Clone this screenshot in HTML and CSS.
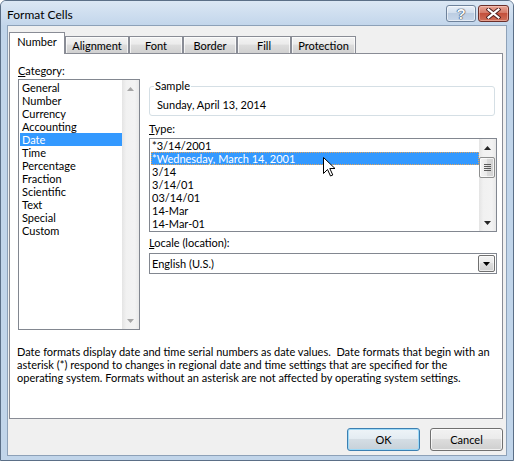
FILE: index.html
```html
<!DOCTYPE html>
<html lang="en">
<head>
<meta charset="utf-8">
<title>Format Cells</title>
<link rel="stylesheet" href="styles.css">
</head>
<body>
<div class="window">
  <div class="titlebar">
    <span class="title">Format Cells</span>
    <div class="caption-btns">
      <span class="cap-btn help"><span class="q">?</span></span>
      <span class="cap-btn close">
        <svg width="15" height="11" viewBox="0 0 15 11">
          <path d="M2.5 1.5 L12.5 9.5 M12.5 1.5 L2.5 9.5" stroke="#4a1c1c" stroke-width="4" stroke-linecap="square" fill="none"/>
          <path d="M2.5 1.5 L12.5 9.5 M12.5 1.5 L2.5 9.5" stroke="#ffffff" stroke-width="2.2" stroke-linecap="square" fill="none"/>
        </svg>
      </span>
    </div>
  </div>
  <div class="client">
    <div class="tabs">
      <div class="tab active w-number">Number</div>
      <div class="tab w-alignment">Alignment</div>
      <div class="tab w-std">Font</div>
      <div class="tab w-std">Border</div>
      <div class="tab w-std">Fill</div>
      <div class="tab w-protection">Protection</div>
    </div>
    <div class="panel">
      <div class="cols">
        <div class="col-left">
          <div class="label"><u>C</u>ategory:</div>
          <div class="listbox cat">
            <ul class="items">
              <li>General</li>
              <li>Number</li>
              <li>Currency</li>
              <li>Accounting</li>
              <li class="sel">Date</li>
              <li>Time</li>
              <li>Percentage</li>
              <li>Fraction</li>
              <li>Scientific</li>
              <li>Text</li>
              <li>Special</li>
              <li>Custom</li>
            </ul>
            <div class="vscroll disabled">
              <div class="sb-btn"><svg width="7" height="4" viewBox="0 0 7 4"><path d="M0 4 L3.5 0 L7 4 Z"/></svg></div>
              <div class="sb-track"></div>
              <div class="sb-btn"><svg width="7" height="4" viewBox="0 0 7 4"><path d="M0 0 L7 0 L3.5 4 Z"/></svg></div>
            </div>
          </div>
        </div>
        <div class="col-right">
          <fieldset class="sample">
            <legend>Sample</legend>
            <div class="sample-text">Sunday, April 13, 2014</div>
          </fieldset>
          <div class="label type-label"><u>T</u>ype:</div>
          <div class="listbox type">
            <ul class="items">
              <li>*3/14/2001</li>
              <li class="sel focus">*Wednesday, March 14, 2001</li>
              <li>3/14</li>
              <li>3/14/01</li>
              <li>03/14/01</li>
              <li>14-Mar</li>
              <li>14-Mar-01</li>
            </ul>
            <div class="vscroll">
              <div class="sb-btn"><svg width="7" height="4" viewBox="0 0 7 4"><path d="M0 4 L3.5 0 L7 4 Z"/></svg></div>
              <div class="sb-track">
                <div class="thumb">
                  <svg width="7" height="7" viewBox="0 0 7 7">
                    <path d="M0 0.5 H7 M0 2.5 H7 M0 4.5 H7 M0 6.5 H7" stroke="#5a5a5a" stroke-width="1"/>
                  </svg>
                </div>
              </div>
              <div class="sb-btn"><svg width="7" height="4" viewBox="0 0 7 4"><path d="M0 0 L7 0 L3.5 4 Z"/></svg></div>
            </div>
            <svg class="cursor" width="13" height="20" viewBox="0 0 13 20">
              <path d="M0.5 0.5 L0.5 16.5 L4.5 12.5 L7.5 19 L9.8 18 L6.8 11.5 L12 11.5 Z" fill="#ffffff" stroke="#000000" stroke-width="1" stroke-linejoin="miter"/>
            </svg>
          </div>
          <div class="label locale-label"><u>L</u>ocale (location):</div>
          <div class="combo">
            <span class="combo-text">English (U.S.)</span>
            <span class="combo-btn"><svg width="7" height="4" viewBox="0 0 7 4"><path d="M0 0 L7 0 L3.5 4 Z" fill="#000"/></svg></span>
          </div>
        </div>
      </div>
      <p class="desc">Date formats display date and time serial numbers as date values.&nbsp; Date formats that begin with an<br>asterisk (*) respond to changes in regional date and time settings that are specified for the<br>operating system. Formats without an asterisk are not affected by operating system settings.</p>
    </div>
    <div class="buttons">
      <button class="btn default">OK</button>
      <button class="btn">Cancel</button>
    </div>
  </div>
</div>
</body>
</html>
```
FILE: styles.css
```css
* { box-sizing: border-box; }
html, body { margin: 0; padding: 0; }
body {
  width: 514px;
  height: 461px;
  overflow: hidden;
  background: #ffffff;
  font-family: Lato, "Liberation Sans", sans-serif;
  font-size: 11px;
  color: #000;
}

/* window frame */
.window {
  width: 514px;
  height: 461px;
  border: 1px solid #5b6f87;
  border-radius: 6px 6px 0 0;
  background: #c1d5ea;
  display: flex;
  flex-direction: column;
}
.titlebar {
  height: 24px;
  flex: none;
  display: flex;
  align-items: flex-start;
  padding: 4px 4px 0 6px;
  background: linear-gradient(#dbe7f4, #c3d6eb);
  border-radius: 5px 5px 0 0;
}
.title {
  font-size: 12px;
  line-height: 17px;
  margin-top: 1px;
  color: #000;
}
.caption-btns {
  margin-left: auto;
  display: flex;
  gap: 2px;
}
.cap-btn {
  height: 17px;
  border-radius: 3px;
  display: flex;
  align-items: center;
  justify-content: center;
}
.help {
  width: 30px;
  border: 1px solid #6e829b;
  background: linear-gradient(#e9f0f8, #d2dfee 45%, #bccde2 50%, #c7d7ea);
  box-shadow: inset 0 0 0 1px rgba(255,255,255,0.55);
}
.help .q {
  font-family: "Liberation Sans", sans-serif;
  font-weight: bold;
  font-size: 15px;
  line-height: 15px;
  color: #f4f7fb;
  text-shadow: 0 0 1px #2f3d52, 0 0 1px #2f3d52, 0 0 1px #2f3d52;
}
.close {
  width: 31px;
  border: 1px solid #6b2f2a;
  background: linear-gradient(#e8a596, #d57a68 45%, #c4503c 50%, #d0705a);
  box-shadow: inset 0 0 0 1px rgba(255,220,210,0.45);
}

/* client area */
.client {
  flex: 1;
  margin: 0 6px 4px;
  border: 1px solid #8da1b8;
  background: #f0f0f0;
  display: flex;
  flex-direction: column;
}

/* tabs */
.tabs {
  height: 27px;
  flex: none;
  display: flex;
  align-items: flex-end;
  padding: 6px 0 0 1px;
}
.tab {
  height: 17px;
  border: 1px solid #898c95;
  border-bottom: none;
  background: linear-gradient(#f3f3f3, #ebebeb 45%, #dddddd 50%, #d0d0d0);
  box-shadow: inset 1px 1px 0 rgba(255,255,255,0.7), inset -1px 0 0 rgba(255,255,255,0.7);
  display: flex;
  align-items: center;
  justify-content: center;
  line-height: 14px;
  padding-top: 1px;
}
.tab.active {
  height: 22px;
  margin-bottom: -1px;
  position: relative;
  z-index: 1;
  background: #ffffff;
  box-shadow: none;
  padding-top: 0;
  padding-bottom: 3px;
}
.w-number { width: 56px; }
.w-alignment { width: 64px; }
.w-std { width: 54px; }
.w-protection { width: 65px; }

/* panel */
.panel {
  height: 366px;
  flex: none;
  margin: 0 3px 0 1px;
  border: 1px solid #898c95;
  background: #ffffff;
}
.cols {
  display: flex;
  gap: 9px;
  padding: 10px 5px 0 8px;
}
.col-left { width: 122px; flex: none; }
.col-right { flex: 1; min-width: 0; }
.label {
  line-height: 14px;
  height: 14px;
  margin-bottom: 1px;
}
.label u { text-underline-offset: 1px; }

/* listboxes */
.listbox {
  position: relative;
  border: 1px solid #828790;
  background: #ffffff;
  display: flex;
}
.listbox .items {
  flex: 1;
  min-width: 0;
  list-style: none;
  margin: 0;
  padding: 0 0 0 1px;
}
.listbox li {
  height: 13px;
  line-height: 13px;
  padding-left: 1px;
  white-space: nowrap;
}
.listbox li.sel {
  background: #3399ff;
  color: #ffffff;
}
.listbox li.focus {
  outline: 1px dotted #e0a35c;
  outline-offset: -1px;
}
.cat { height: 251px; }
.cat .items { padding-top: 1px; }
.cat li { padding-left: 2px; }
.type { height: 94px; }

/* scrollbars */
.vscroll {
  width: 17px;
  flex: none;
  display: flex;
  flex-direction: column;
  background: linear-gradient(90deg, #e4e4e4, #f1f1f1 25%, #f3f3f3 75%, #e9e9e9);
}
.sb-btn {
  height: 17px;
  flex: none;
  display: flex;
  align-items: center;
  justify-content: center;
}
.sb-btn svg path { fill: #262626; }
.vscroll.disabled .sb-btn svg path { fill: #a6a6a6; }
.sb-track {
  flex: 1;
  padding-top: 1px;
}
.thumb {
  height: 21px;
  width: 16px;
  margin-left: 0;
  border: 1px solid #8e8f8f;
  border-radius: 2px;
  background: linear-gradient(90deg, #f4f4f4, #e9e9e9 50%, #dadada 51%, #d2d2d2);
  box-shadow: inset 0 0 0 1px rgba(255,255,255,0.7);
  display: flex;
  align-items: center;
  justify-content: center;
}

.cursor {
  position: absolute;
  left: 173px;
  top: 18px;
}

/* sample group */
.sample {
  margin: 15px 0 0 0;
  width: 346px;
  min-width: 0;
  border: 1px solid #d5dfe5;
  border-radius: 3px;
  padding: 5px 0 3px 7px;
}
.sample legend {
  padding: 0 1px;
  margin-left: -3px;
  line-height: 14px;
  font-size: 11px;
}
.sample-text {
  line-height: 14px;
}
.type-label { margin-top: 6px; margin-bottom: 2px; }
.locale-label { margin-top: 4px; margin-bottom: 3px; }

/* combo box */
.combo {
  height: 21px;
  border: 1px solid #828790;
  background: #ffffff;
  display: flex;
  align-items: center;
  padding: 0 1px 0 2px;
}
.combo-text { flex: 1; line-height: 14px; }
.combo-btn {
  width: 17px;
  height: 17px;
  border: 1px solid #707070;
  border-radius: 2px;
  background: linear-gradient(#f2f2f2, #ebebeb 45%, #dddddd 50%, #cfcfcf);
  box-shadow: inset 0 0 0 1px rgba(255,255,255,0.6);
  display: flex;
  align-items: center;
  justify-content: center;
}

/* description */
.desc {
  margin: 15px 0 0 7px;
  line-height: 13px;
  white-space: nowrap;
}

/* buttons */
.buttons {
  display: flex;
  justify-content: flex-end;
  gap: 10px;
  padding: 9px 3px 0 0;
}
.btn {
  width: 73px;
  height: 23px;
  border: 1px solid #707070;
  border-radius: 3px;
  background: linear-gradient(#f2f2f2, #ebebeb 45%, #dddddd 50%, #cfcfcf);
  box-shadow: inset 0 0 0 1px rgba(255,255,255,0.7);
  font-family: Lato, "Liberation Sans", sans-serif;
  font-size: 11px;
  color: #000;
  padding: 0;
  line-height: 14px;
}
.btn.default {
  border-color: #3c7fb1;
  box-shadow: inset 0 0 0 1px #9cd9f7;
  background: linear-gradient(#eef4f8, #e4ecf2 45%, #d4dde4 50%, #c7d1d9);
}
```
